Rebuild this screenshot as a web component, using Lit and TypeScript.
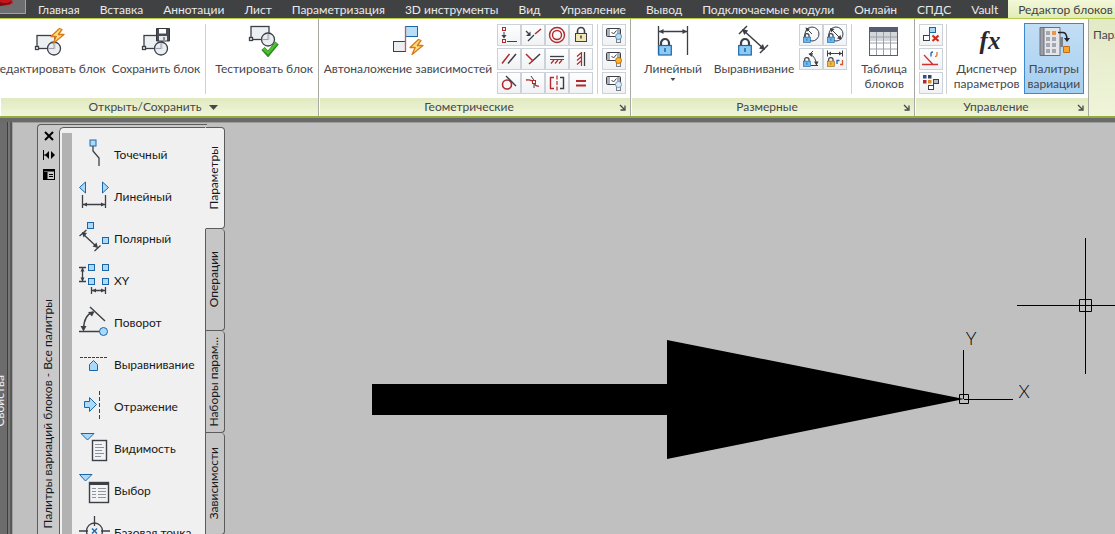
import {LitElement, html, svg, css} from "lit";
import {customElement, state} from "lit/decorators.js";
import {classMap} from "lit/directives/class-map.js";

const INK = "#3c3f46";
const RED = "#b2282d";
const SKY = "#a9dafb";
const BLUE = "#1c66a8";

const bolt = (x: number, y: number) => svg`<path transform="translate(${x} ${y})" d="M9.5 .5 1 8.5h5.2L3 15.5 14 6.500H8.300L12 1.500z" fill="#ffdf7a" stroke="#d9791a" stroke-width="1.300" stroke-linejoin="round"/>`;

const blockShape = (x: number, y: number) => svg`
  <g transform="translate(${x} ${y})" stroke="${INK}" stroke-width="1.300">
    <rect x="2" y=".5" width="18" height="13" fill="#edf0f3"/>
    <rect x=".5" y="11.500" width="3" height="3" fill="#fff"/>
    <circle cx="19" cy="13.500" r="6.500" fill="#e8ecf2" fill-opacity=".85"/>
    <path d="M19 8v5.500h-5" fill="none" stroke="#9aa0a8" stroke-width="1"/>
  </g>`;

const lock = (x: number, y: number, s: number, fill: string, edge: string) => svg`
  <g transform="translate(${x} ${y}) scale(${s})">
    <path d="M3 8V5a4 4 0 0 1 8 0v3" fill="none" stroke="${INK}" stroke-width="2.200"/>
    <rect x=".7" y="7.500" width="12.600" height="9.500" fill="${fill}" stroke="${edge}" stroke-width="1.200"/>
    <path d="M7 10v4" stroke="${edge}" stroke-width="1.500"/>
  </g>`;

const node = (x: number, y: number) => svg`<rect x="${x}" y="${y}" width="6" height="6" fill="${SKY}" stroke="${BLUE}"/>`;
const redNode = (x: number, y: number) => svg`<rect x="${x}" y="${y}" width="3" height="3" fill="#fff" stroke="${RED}"/>`;

const BIG: Record<string, unknown> = {
  edit: svg`${blockShape(2, 10)}${bolt(17, 3)}`,
  save: svg`${blockShape(2, 10)}
    <path d="M16.500 3.500h13v12.500h-13z" fill="#4a4d54" stroke="#33363c"/><path d="M19 4h7v4.500h-7z" fill="#fff"/><path d="M19 11h8v4.500h-8z" fill="#e6e9ee"/><path d="M24 12v3" stroke="#33363c"/>`,
  test: svg`${blockShape(1, 1)}<path d="m15 23.500 5 5.500 9-11" fill="none" stroke="#2d8d1d" stroke-width="4.500"/><path d="m15.500 23.500 4.500 4.500 8.500-10" fill="none" stroke="#4fbf33" stroke-width="2.500"/>`,
  auto: svg`<rect x="13.500" y="1.500" width="12" height="10" fill="#b8def6" stroke="${BLUE}"/><rect x="1.500" y="16.500" width="12" height="10" fill="#eceff2" stroke="${INK}"/><path d="M13.500 1v25.500" stroke="#d0534d" stroke-width="1.300"/>${bolt(17, 14)}`,
  linear: svg`<path d="M1.500 1v28M30.500 1v29M2 6.500h28" stroke="${INK}" stroke-width="1.300"/><path d="m2 6.500 4.500-2.500v5zM30 6.500 25.500 4v5z" fill="${INK}"/>${lock(1, 13, 1, "#8ccbf6", BLUE)}`,
  aligned: svg`<path d="M1 9 9 1M22 28l8-8M5 5l21 19" stroke="${INK}" stroke-width="1.500"/><path d="m4 4 2.200 6 4-4.500zM27 25l-6-1.500 4-4.500z" fill="${INK}"/>${lock(0, 13, 1, "#8ccbf6", BLUE)}`,
  table: svg`<rect x="1.500" y="2.500" width="28" height="28" fill="#fff" stroke="#5a5e66"/><path d="M2 7h27v9H2z" fill="#d3d6da"/><path d="M1 2h29v5H1z" fill="#565d6e"/><path d="M2 12h27M2 18h27M2 24h27M8.500 7v23M15.500 7v23M22.500 7v23" stroke="#9ba0a8"/>`,
  fx: svg`<text x="19" y="24" text-anchor="middle" font-family="Liberation Serif, serif" font-size="25" font-style="italic" font-weight="700" fill="#26282c">fx</text>`,
  palettes: svg`<path d="M5 2.500h17v28H5z" fill="#e4e6ea" stroke="#6a6e76"/><path d="M2 2.500h4v28H2z" fill="#9a9fa8" stroke="#6a6e76"/>
    <path d="M22 12h3v10h-3z" fill="#7d828b"/>
    <g fill="#a3a8b0"><path d="M8 6h4v4H8zM8 12h4v4H8zM14 12h4v4h-4zM8 18h4v4H8zM14 18h4v4h-4zM8 24h4v4H8zM14 24h4v4h-4z"/></g><path d="M14 6h4v4h-4z" fill="#ee9548"/>
    <path d="M20 7.500h5q4 0 4 8" fill="none" stroke="#202226" stroke-width="1.500"/><path d="m26 13 3 4 3-4z" fill="#202226"/><path d="M25.500 21.500h6v6h-6z" fill="#f8a72d" stroke="#c56a14"/>`,
};

const card = (fill: string, edge: string) => svg`
  <rect x="4.500" y="4.500" width="14" height="8" rx="1" fill="#a9b0bb" stroke="${INK}"/><rect x="8" y="5" width="7" height="7" fill="#fff"/><path d="m9.500 8 2 2 3-3.500" fill="none" stroke="${INK}"/>
  <rect x="14.500" y="14.500" width="4" height="4" fill="#e9edf2" stroke="#7b8089"/><circle cx="16.500" cy="12.500" r="3" fill="${fill}" stroke="${edge}"/>`;

const SMALL: Record<string, unknown> = {
  coincident: svg`${redNode(5.5, 3.5)}${redNode(5.5, 15.5)}<path d="M7 8v5M10 17.500h10" stroke="${INK}"/><path d="M4.500 11h5L7 14.500z" fill="${INK}"/>`,
  collinear: svg`<path d="m7 17 6-6M5 7l4 4" stroke="${INK}" stroke-width="1.300"/><path d="m14 10 6-5" stroke="${RED}" stroke-width="1.500"/><path d="M9.500 7.500v4.500H5z" fill="${INK}"/>`,
  concentric: svg`<g fill="none" stroke="${RED}" stroke-width="1.400"><circle cx="12" cy="11" r="7.500"/><circle cx="12" cy="11" r="4.500"/></g>`,
  fix: svg`<path d="M8.500 10V7a3.500 3.500 0 0 1 7 0v3" fill="none" stroke="${INK}" stroke-width="1.600"/><rect x="6.500" y="9.500" width="11" height="8" fill="#f1e7b4" stroke="${INK}"/><path d="M12 11.500v3" stroke="${INK}" stroke-width="1.500"/>`,
  parallel: svg`<path d="M5 15.500 12.500 6" stroke="${RED}" stroke-width="1.500"/><path d="M11 15.500 19 6" stroke="${INK}" stroke-width="1.500"/>`,
  perpendicular: svg`<path d="m5 6 7 7" stroke="${RED}" stroke-width="1.500"/><path d="M12 12.500 19 6" stroke="${INK}" stroke-width="1.500"/><path d="m8 16 4-3.500" stroke="${RED}" stroke-width="1.500"/>`,
  horizontal: svg`<path d="M5 8.500h14" stroke="${INK}" stroke-width="1.300"/><path d="M5 11.500h14M9 12l-3 3.500M13 12l-3 3.500M17 12l-3 3.500" stroke="${RED}" stroke-width="1.200"/>`,
  vertical: svg`<path d="M15.500 4v14" stroke="${INK}" stroke-width="1.300"/><path d="M12.500 4v14M12 5 8 8.500M12 9l-4 3.500M12 13l-4 3.500" stroke="${RED}" stroke-width="1.200"/>`,
  tangent: svg`<circle cx="10" cy="12.500" r="4.500" fill="none" stroke="${RED}" stroke-width="1.600"/><path d="m9 4 10 10" stroke="${INK}" stroke-width="1.300"/>`,
  smooth: svg`<path d="M5 8q6-1 8 3t5 3" fill="none" stroke="${RED}" stroke-width="1.300"/><path d="M10 4q4 4 3 8v4" fill="none" stroke="${INK}"/>${redNode(11.5, 8.5)}`,
  symmetric: svg`<path d="M9 5.500H5.500v11H9" fill="none" stroke="${RED}" stroke-width="1.400"/><path d="M15 5.500h3.500v11H15" fill="none" stroke="${INK}" stroke-width="1.400"/><path d="M12 3.500v15" stroke="${RED}" stroke-width="1.200" stroke-dasharray="4 1.500"/>`,
  equal: svg`<path d="M7 9h10M7 13.500h10" stroke="${RED}" stroke-width="2"/>`,
  show: card("#b5dcf5", "#5b8fb6"),
  showAll: card("#ffb52e", "#bf6f10"),
  hideAll: card("#dcebf7", "#6f9cc4"),
  radius: svg`<circle cx="13" cy="10" r="7" fill="none" stroke="${INK}"/><path d="m13 10-5-5" stroke="${INK}"/><path d="m6.500 3.500 4.500 1.200-3.300 3.300z" fill="${INK}"/>${lock(4, 9, 0.55, "#6db8ec", BLUE)}`,
  diameter: svg`<circle cx="13" cy="10" r="7" fill="none" stroke="${INK}"/><path d="m8 5 10 10" stroke="${INK}"/><path d="m7 4 4.500 1-3.500 3.500zM18.500 15.500l-1-4.500-3.500 3.500z" fill="${INK}"/>${lock(4, 9, 0.55, "#6db8ec", BLUE)}`,
  angular: svg`<path d="M12 17.500h7M10 7l4-4M11 6q6 3 6.500 11" fill="none" stroke="${INK}"/><path d="m9.500 5.500 4.500-.5-1.500 4zM17.500 17.500 15 13.500h4.500z" fill="${INK}"/>${lock(4, 9, 0.55, "#6db8ec", BLUE)}`,
  convert: svg`<path d="M4.500 2.500v6M19.500 2.500v6M5 5.500h14" stroke="${INK}"/><path d="m5 5.500 3-2v4zM19 5.500l-3-2v4z" fill="${INK}"/>${lock(4, 9, 0.55, "#f6b93b", "#9b6a10")}<path d="M14 16v-3.500h2.500" fill="none" stroke="${BLUE}" stroke-width="1.300"/><path d="M19.500 12v4.500H17" fill="none" stroke="#d9562b" stroke-width="1.300"/>`,
  remove: svg`<rect x="10.500" y="3.500" width="6" height="5" fill="#a9d8f6" stroke="${BLUE}"/><rect x="4.500" y="11.500" width="6" height="5" fill="#fff" stroke="${INK}"/><path d="M10.500 3v14" stroke="${RED}"/><path d="m13.500 11.500 6 5.500m0-5.500-6 5.500" stroke="#cf2a1f" stroke-width="2.200"/>`,
  construct: svg`<path d="M3 16.500h16M5 7l9 9.500" stroke="#d0332d" stroke-width="1.300"/><path d="M12 8.500V5.500q0-1.500 2-1.500" fill="none" stroke="${BLUE}" stroke-width="1.300"/><path d="M18 4v3q0 1.500-2 1.500" fill="none" stroke="#d9762b" stroke-width="1.300"/>`,
  status: svg`<path d="M4 3h3.500v3.500H4z" fill="#2b4f9e"/><path d="M9 3h3.500v3.500H9z" fill="#38445e"/><path d="M4 8h3.500v3.500H4z" fill="#b2282d"/><path d="M9 8h3.500v3.500H9z" fill="#d98a2b"/><rect x="9.500" y="13.500" width="5" height="4" fill="#fff" stroke="${INK}"/><rect x="14.500" y="7.500" width="5" height="4" fill="#b9bec6" stroke="${INK}"/><path d="M14.500 8v9" stroke="${INK}"/>`,
};

const ITEMS: Record<string, unknown> = {
  point: svg`${node(12, 2)}<path d="M15 8v5l6 7v8" fill="none" stroke="${INK}" stroke-width="1.300"/>`,
  linear: svg`<path d="M7.500 2v11L1.500 7.500zM24.500 2v11l6-5.500z" fill="${SKY}" stroke="${BLUE}"/><path d="M4.500 15v13M27.500 15v13M5 24.500h22" stroke="${INK}" stroke-width="1.300"/><path d="m5 24.500 4-2v4zM27 24.500l-4-2v4z" fill="${INK}"/>`,
  polar: svg`${node(9.5, 0.5)}${node(24.5, 15.5)}<path d="m1.500 14 7-6M16.500 29l6-5.500M5 12l14 13" stroke="${INK}" stroke-width="1.300"/><path d="m4 10 1.500 5.500L9 11zM20 26l-5.500-1.500 4-4z" fill="${INK}"/>`,
  xy: svg`${node(10.5, 0.5)}${node(24.5, 0.5)}${node(10.5, 14.5)}${node(24.5, 14.5)}<path d="M1 3.500h7M1 17.500h7M4.500 4v13M13.500 23v7M27.500 23v7M14 26.500h13" stroke="${INK}" stroke-width="1.300"/><path d="m4.500 3.500-2 4h4zM4.500 17.500l-2-4h4zM14 26.500l4-2v4zM27 26.500l-4-2v4z" fill="${INK}"/>`,
  rotate: svg`<path d="M1 25.500h22M12 1l15 14M5.500 23Q6 9 15 6" fill="none" stroke="${INK}" stroke-width="1.400"/><path d="M16.500 5.500 10 6l4 4.500zM5.500 25.500 2.500 20h6z" fill="${INK}"/><circle cx="25.500" cy="25.500" r="4" fill="${SKY}" stroke="${BLUE}"/>`,
  align: svg`<path d="M2 9.500h28" stroke="${INK}" stroke-dasharray="3 1"/><path d="M11.500 22.500v-6L15.500 12.500 19.500 16.500v6z" fill="${SKY}" stroke="${BLUE}"/>`,
  flip: svg`<path d="M21.500 1v28" stroke="${INK}" stroke-dasharray="4 2"/><path d="M6.500 11.500h5v-4l7 7-7 7v-4h-5z" fill="${SKY}" stroke="${BLUE}"/>`,
  visibility: svg`<path d="M3 1.500h13L9.500 8z" fill="${SKY}" stroke="${BLUE}"/><rect x="14.500" y="8.500" width="14" height="20" fill="#f2f3f5" stroke="${INK}" stroke-width="1.400"/><path d="M17 12.500h7M17 15.500h9M17 18.500h7M17 21.500h9M17 24.500h6" stroke="#8f949c"/>`,
  lookup: svg`<path d="M1.500 0.500h12.500L7.500 7z" fill="${SKY}" stroke="${BLUE}"/><rect x="11.500" y="8.500" width="19" height="20" fill="#f2f3f5" stroke="${INK}" stroke-width="1.400"/><path d="M11 8h20v3H11z" fill="${INK}"/><path d="M14 14.500h4M14 17.500h4M14 20.500h4M14 23.500h4M20 14.500h8M20 17.500h8M20 20.500h8M20 23.500h8" stroke="#8f949c"/>`,
  base: svg`<circle cx="16.500" cy="15" r="8" fill="none" stroke="${INK}" stroke-width="1.300"/><path d="M16.500 0v10M16.500 21v8M1 15h9M23 15h9" stroke="${INK}" stroke-width="1.300"/><path d="m14 12.500 5 5m0-5-5 5" stroke="${BLUE}" stroke-width="1.400"/>`,
};

const TABS = ["Главная", "Вставка", "Аннотации", "Лист", "Параметризация", "3D инструменты", "Вид", "Управление", "Вывод", "Подключаемые модули", "Онлайн", "СПДС", "Vault", "Редактор блоков"];
const PALETTE_TABS = ["Параметры", "Операции", "Наборы парам...", "Зависимости"];
const PALETTE_ITEMS: [string, string][] = [
  ["point", "Точечный"], ["linear", "Линейный"], ["polar", "Полярный"], ["xy", "XY"], ["rotate", "Поворот"],
  ["align", "Выравнивание"], ["flip", "Отражение"], ["visibility", "Видимость"], ["lookup", "Выбор"], ["base", "Базовая точка"],
];
const GEOMETRIC: [string, string][] = [
  ["coincident", "Совпадение"], ["collinear", "Коллинеарность"], ["concentric", "Концентричность"], ["fix", "Фиксация"],
  ["parallel", "Параллельность"], ["perpendicular", "Перпендикулярность"], ["horizontal", "Горизонтальность"], ["vertical", "Вертикальность"],
  ["tangent", "Касание"], ["smooth", "Сглаживание"], ["symmetric", "Симметрия"], ["equal", "Равенство"],
];

const reset = css`
  * { box-sizing: border-box; }
  button { margin: 0; padding: 0; border: 0; background: none; font: inherit; color: inherit; }
  svg { display: block; }
`;

@customElement("block-ribbon")
export class BlockRibbon extends LitElement {
  static styles = [reset, css`
    :host { display: block; color: #45474b; }
    .panels { display: grid; grid-template-columns: 319fr 312fr 284fr 174fr 26fr; height: 100px; border-top: 1px solid #b5cc46; border-bottom: 2px solid #94ac3c; background: #fff; }
    .panel { display: flex; flex-direction: column; min-width: 0; overflow: hidden; border-right: 1px solid #a7a9a2; }
    .body { flex: 1; display: flex; justify-content: center; gap: 4px; padding: 5px 2px 4px; }
    .open { justify-content: flex-end; padding-right: 4px; }
    .tight { gap: 3px; }
    .foot { display: grid; grid-template-columns: 4px 1fr 16px; align-items: center; height: 18px; margin: 0 0 0 1px; background: linear-gradient(#e1e9c0, #f0f5d9); text-align: center; line-height: 16px; }
    .foot > :nth-child(2) { display: flex; justify-content: center; align-items: center; gap: 8px; }
    .big { display: flex; flex-direction: column; align-items: center; gap: 4px; padding: 1px 1px 0; line-height: 15px; white-space: nowrap; flex: none; }
    .wide { padding: 1px 7px 0; }
    .big.on { border: 1px solid #3b8ad0; background: linear-gradient(#c3def5, #a6cff0); padding: 1px 3px 0; margin-top: -1px; }
    .sep { width: 1px; background: #cdd0d4; flex: none; }
    .grid { display: grid; grid-auto-rows: 22px; gap: 2px 0; align-content: start; flex: none; }
    .four { grid-template-columns: repeat(4, 24px); }
    .two { grid-template-columns: repeat(2, 24px); }
    .one { grid-template-columns: 24px; }
    .cell { outline: 1px solid #ccd2da; outline-offset: -1px; background: linear-gradient(#fff, #eff1f4); }
    .more { display: flex; justify-content: center; }
    .label { display: block; text-align: center; }
    .rest { background: linear-gradient(#e2e9c6, #f0f5da); padding: 8px 0 0 4px; white-space: nowrap; border: 0; }
  `];
  big(icon: string, lines: string[], opts: {wide?: boolean; on?: boolean; menu?: boolean} = {}) {
    return html`<button class=${classMap({big: true, wide: !!opts.wide, on: !!opts.on})}>
      <svg width="32" height="32" viewBox="0 0 32 32" aria-hidden="true">${BIG[icon]}</svg>
      <span>${lines.map(l => html`<span class="label">${l}</span>`)}
      ${opts.menu ? html`<svg width="100%" height="8" viewBox="0 0 8 8" aria-hidden="true"><path d="M1.500 2h5L4 5z" fill="#45474b"/></svg>` : ""}</span>
    </button>`;
  }
  cells(cls: string, list: [string, string][]) {
    return html`<div class="grid ${cls}">${list.map(([icon, name]) => html`
      <button class="cell" aria-label=${name}><svg width="24" height="22" viewBox="0 0 24 22" aria-hidden="true">${SMALL[icon]}</svg></button>`)}</div>`;
  }
  foot(title: string) {
    return html`<div class="foot"><span></span><span>${title}</span>
      <button class="more" aria-label="${title}: параметры"><svg width="7" height="7" viewBox="0 0 7 7"><path d="m1 1 4 4M6 1.500v4.500H1.500" fill="none" stroke="#45474b" stroke-width="1.300"/></svg></button></div>`;
  }
  render() {
    return html`<div class="panels">
      <section class="panel">
        <div class="body open">
          ${this.big("edit", ["Редактировать блок"])}${this.big("save", ["Сохранить блок"])}
          <i class="sep"></i><i></i>${this.big("test", ["Тестировать блок"])}
        </div>
        <div class="foot"><span></span><button>Открыть/Сохранить<svg width="9" height="5" viewBox="0 0 9 5" aria-hidden="true"><path d="M0 0h9L4.500 5z" fill="#45474b"/></svg></button></div>
      </section>
      <section class="panel">
        <div class="body">
          ${this.big("auto", ["Автоналожение зависимостей"])}
          ${this.cells("four", GEOMETRIC)}<i class="sep"></i>
          ${this.cells("one", [["show", "Показать"], ["showAll", "Показать все"], ["hideAll", "Скрыть все"]])}
        </div>
        ${this.foot("Геометрические")}
      </section>
      <section class="panel">
        <div class="body">
          ${this.big("linear", ["Линейный"], {wide: true, menu: true})}${this.big("aligned", ["Выравнивание"])}
          ${this.cells("two", [["radius", "Радиус"], ["diameter", "Диаметр"], ["angular", "Угловой"], ["convert", "Преобразовать"]])}
          <i class="sep"></i><i></i>${this.big("table", ["Таблица", "блоков"])}
        </div>
        ${this.foot("Размерные")}
      </section>
      <section class="panel">
        <div class="body tight">
          ${this.cells("one", [["remove", "Удалить"], ["construct", "Вспомогательная"], ["status", "Статус"]])}
          <i class="sep"></i><i></i>
          ${this.big("fx", ["Диспетчер", "параметров"])}${this.big("palettes", ["Палитры", "вариации"], {on: true})}
        </div>
        ${this.foot("Управление")}
      </section>
      <section class="panel rest">Параметры</section>
    </div>`;
  }
}

@customElement("variation-palette")
export class VariationPalette extends LitElement {
  @state() private active = 0;
  static styles = [reset, css`
    :host { display: grid; grid-template-columns: 22px 1fr; width: 188px; color: #17181a; }
    .bar { display: flex; flex-direction: column; align-items: center; gap: 7px; padding: 5px 0; background: #cacaca; border: 1px solid #5c5c5c; border-right: 0; border-bottom: 0; border-radius: 4px 0 0 0; }
    .bar button { width: 12px; height: 12px; }
    .side { writing-mode: vertical-rl; transform: rotate(180deg); white-space: nowrap; line-height: 16px; }
    .title { margin: auto 2px 0 0; font: inherit; line-height: 16px; }
    .back { background: linear-gradient(#5c5c5c, #5c5c5c) 0 0 / 148px 1px no-repeat, linear-gradient(#cacaca, #cacaca) 0 0 / 148px 100% no-repeat; padding-top: 3px; min-height: 0; }
    .sheet { display: grid; grid-template-columns: 1fr 20px; height: 100%; }
    .page { display: grid; grid-template-columns: 10px 1fr; gap: 6px; padding: 5px 0 0 2px; background: #f0f0f0; border: 1px solid #5c5c5c; border-width: 1px 0 0 1px; border-radius: 5px 0 0 0; min-height: 0; overflow: hidden; }
    .scroll { background: #b2b2b2; }
    ul { margin: 0; padding: 0; list-style: none; }
    .item { display: flex; align-items: center; gap: 4px; height: 42px; white-space: nowrap; }
    .tabs { display: grid; grid-auto-rows: 102px; }
    .tab { display: flex; align-items: center; justify-content: center; background: #c6c6c6; border: 1px solid #5c5c5c; border-top-width: 0; border-radius: 0 4px 4px 0; }
    .tab.on { background: #f0f0f0; border-left-color: #f0f0f0; border-top-width: 1px; }
    .tab .side { margin-right: 2px; }
  `];
  render() {
    return html`
      <header class="bar">
        <button aria-label="Закрыть"><svg width="12" height="12" viewBox="0 0 12 12"><path d="m2 2 8 8m0-8-8 8" stroke="#000" stroke-width="2"/></svg></button>
        <button aria-label="Автоскрытие"><svg width="14" height="12" viewBox="2 0 14 12"><path d="M1.500 1v10" stroke="#000" stroke-width="3"/><path d="M3 6h4" stroke="#000"/><path d="M8 2v8L4 6zM10 2v8l4-4z"/></svg></button>
        <button aria-label="Свойства"><svg width="12" height="12" viewBox="0 0 12 12"><path d="M0 1h12v11H0z"/><path d="M4.500 4h6.500v7H4.500z" fill="#cacaca"/><path d="M6 6.500h4M6 8.500h4M0 3.500h12" stroke="#000"/><path d="M1 3.500h10" stroke="#cacaca" stroke-width=".5"/></svg></button>
        <h2 class="side title">Палитры вариаций блоков - Все палитры</h2>
      </header>
      <div class="back"><div class="sheet">
        <div class="page"><div class="scroll"></div>
          <ul>${PALETTE_ITEMS.map(([icon, name]) => html`<li><button class="item"><svg width="32" height="32" viewBox="0 0 32 32" aria-hidden="true">${ITEMS[icon]}</svg>${name}</button></li>`)}</ul>
        </div>
        <div class="tabs" role="tablist">${PALETTE_TABS.map((t, i) => html`
          <button role="tab" aria-selected=${i === this.active} class=${classMap({tab: true, on: i === this.active})} @click=${() => (this.active = i)}><span class="side">${t}</span></button>`)}</div>
      </div></div>`;
  }
}

@customElement("app-root")
export class AppRoot extends LitElement {
  static styles = [reset, css`
    :host { display: flex; flex-direction: column; height: 100vh; overflow: hidden; font: 12px Lato, "Open Sans", sans-serif; background: #6a6a6a; }
    .menu { display: flex; height: 18px; flex: none; background: #404142; color: #e9e9e9; line-height: 17px; white-space: nowrap; }
    .logo { width: 26px; height: 14px; margin-right: 2px; flex: none; }
    .menu button { padding: 0 10px; }
    .menu .on { flex: 1; padding-right: 0; text-align: left; background: linear-gradient(#f3f8d8, #e2ecb8); color: #3f4244; }
    main { flex: 1; min-height: 0; display: grid; grid-template-columns: 12px 1fr; padding-top: 4px; }
    .dock { display: flex; align-items: flex-end; justify-content: center; padding-bottom: 108px; overflow: hidden; background: linear-gradient(90deg, #6c6c6c 0 7px, #3e3e3e 7px 8px, #777 8px 10px, #585858 10px); color: #f2f2f2; }
    .dock span { writing-mode: vertical-rl; transform: rotate(180deg); line-height: 16px; flex: none; margin-right: 12px; }
    .canvas { position: relative; overflow: hidden; background: #c0c0c0; border: 1px solid #9d9d9d; border-width: 1px 0 0 1px; }
    .drawing { width: 100%; height: 100%; }
    variation-palette { position: absolute; left: 24px; top: 1px; bottom: 0; }
  `];
  render() {
    return html`
      <nav class="menu">
        <svg class="logo" viewBox="0 0 26 14" aria-hidden="true"><path d="M0 0h26v14H0z" fill="#6d6e70"/><path d="M0 13.500h25.500V0" fill="none" stroke="#a2a2a2"/><path d="M0 0h12l1 3-4 2-9 1z" fill="#c3161c"/><path d="M0 2q5 3 12-1l-2 3-10 2z" fill="#7e0a10"/></svg>
        ${TABS.map((t, i) => html`<button class=${classMap({on: i === TABS.length - 1})}>${t}</button>`)}
      </nav>
      <block-ribbon></block-ribbon>
      <main>
        <aside class="dock"><span>Свойства</span></aside>
        <div class="canvas">
          <svg class="drawing" role="img" aria-label="Блок: стрелка">
            <g transform="translate(-13 -123)">
              <path d="M372 384h295v-44l297 59-297 60v-44H372z"/>
              <g fill="none" stroke="#000">
                <path d="M963.500 350v49M964 399.500h49M959.500 394.500h9v9h-9z"/>
                <path d="M1085.500 238v136M1017 305.500h98M1079.500 299.500h12v12h-12z"/>
              </g>
              <g font-size="18" font-weight="300" text-anchor="middle"><text x="971" y="345">Y</text><text x="1024" y="398">X</text></g>
            </g>
          </svg>
          <variation-palette></variation-palette>
        </div>
      </main>`;
  }
}
